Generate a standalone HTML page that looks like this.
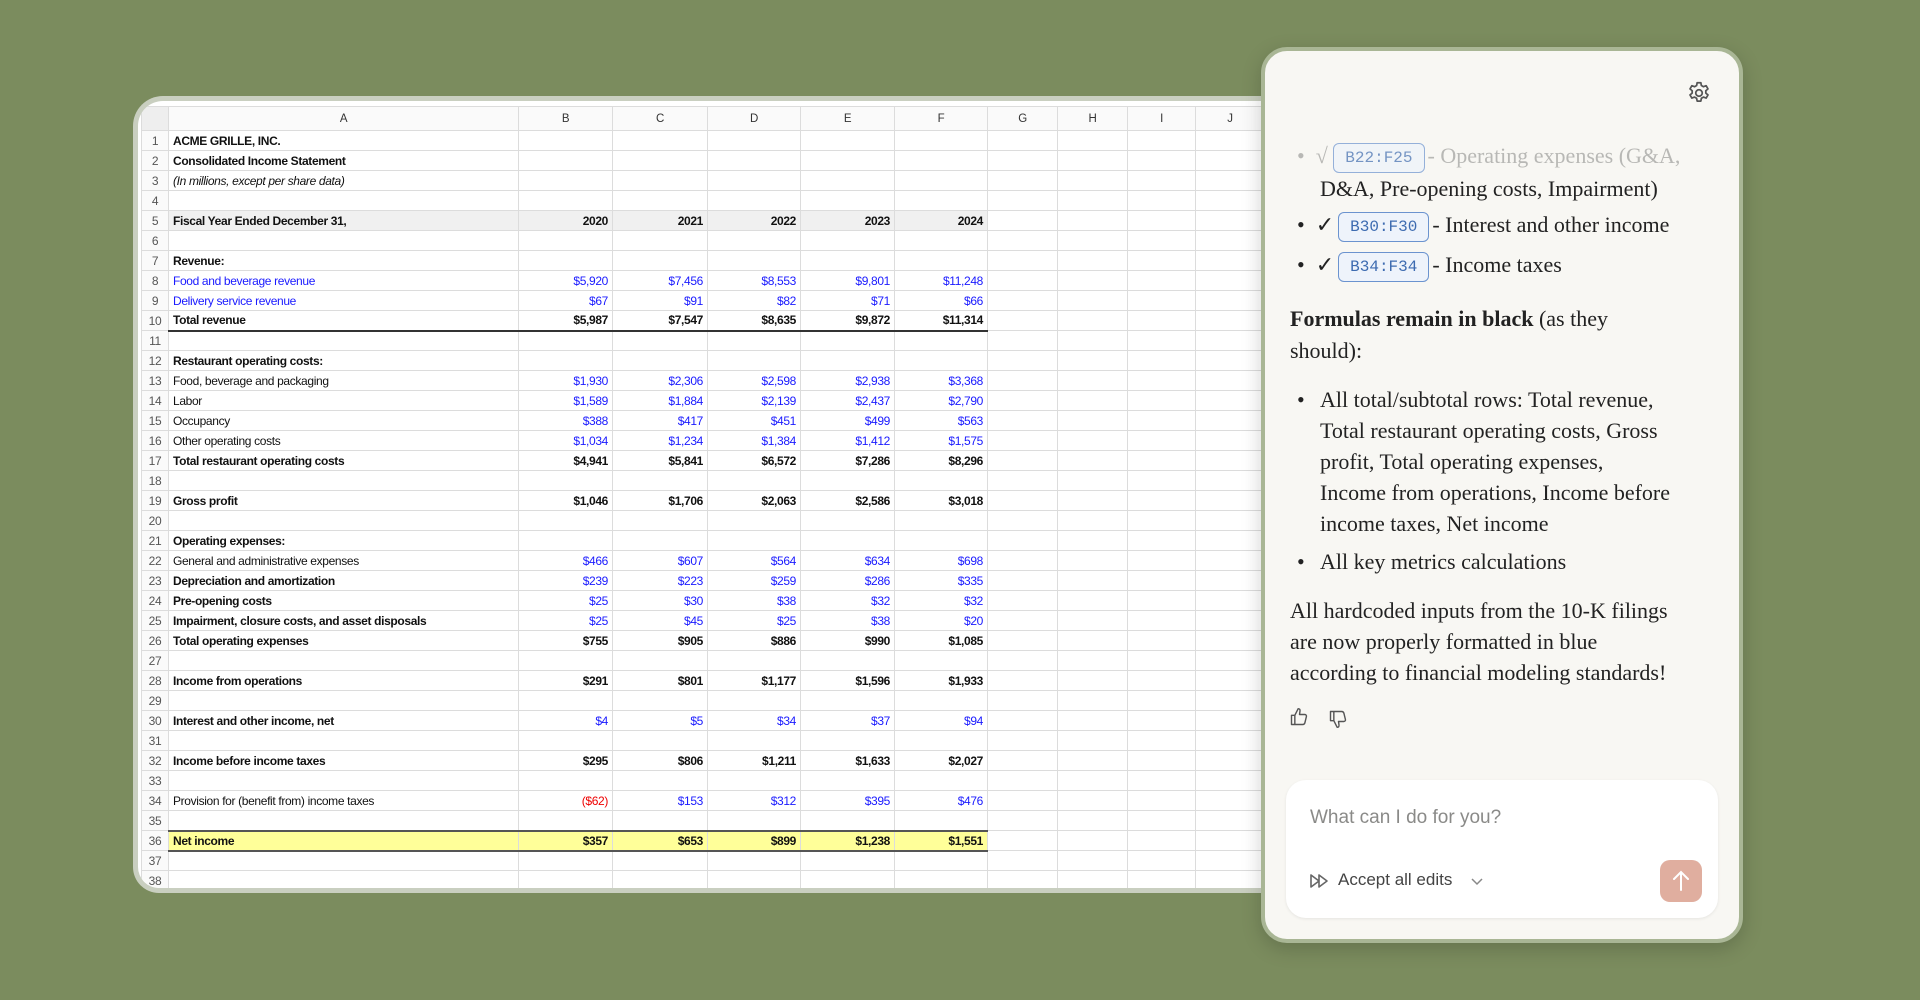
<!DOCTYPE html>
<html><head><meta charset="utf-8"><style>
*{box-sizing:border-box;margin:0;padding:0}
body{width:1920px;height:1000px;background:#7b8c5e;position:relative;overflow:hidden;font-family:"Liberation Sans",sans-serif}
.sheet{position:absolute;left:133px;top:96px;width:1200px;height:797px;background:#fff;border-radius:30px 0 0 26px;border:5px solid #c9cfc0;border-right:none;overflow:hidden}
table{position:absolute;left:3px;top:5px;border-collapse:collapse;table-layout:fixed;font-size:12px;letter-spacing:-0.35px;color:#111}
td{height:20px;border:1px solid #dcdcdc;padding:0 4px;white-space:nowrap;overflow:hidden}
tr.h td{height:24px;text-align:center;color:#333;background:#fafafa;font-size:11.5px}
td.n{text-align:center;color:#555;background:#fafafa;padding:0}
td.r{text-align:right}
.b{font-weight:bold}.i{font-style:italic}.bl{color:#1a1aff}.rd{color:#e00}
tr.g td:not(.n){background:#f0f0f0}
tr.t td.k{border-bottom:2px solid #333}
tr.y td.k{background:#ffff99;border-top:2px solid #555;border-bottom:2px solid #555}
.panel{position:absolute;left:1261px;top:47px;width:482px;height:896px;background:#f8f7f3;border-radius:26px;border:4px solid #a9b695;box-shadow:0 6px 20px rgba(0,0,0,.18);font-family:"Liberation Serif",serif;color:#222;font-size:22px}
.panel .ln{position:absolute;white-space:nowrap;line-height:31px}
.chip{display:inline-block;font-family:"Liberation Mono",monospace;font-size:16px;color:#3d6bb0;background:#eef3fb;border:1.5px solid #6b93cf;border-radius:6px;padding:2px 11px;line-height:24px;vertical-align:1px;margin-right:3px}
.input{position:absolute;left:21px;top:729px;width:432px;height:138px;background:#fff;border-radius:20px;box-shadow:0 1px 3px rgba(0,0,0,.08);font-family:"Liberation Sans",sans-serif}
</style></head><body>
<div class="sheet">
<table>
<colgroup><col style="width:27px"><col style="width:350px"><col style="width:94px"><col style="width:95px"><col style="width:93px"><col style="width:94px"><col style="width:93px"><col style="width:70px"><col style="width:70px"><col style="width:68px"><col style="width:69px"><col style="width:60px"></colgroup>
<tr class="h"><td class="n" style="background:#eee"></td><td>A</td><td>B</td><td>C</td><td>D</td><td>E</td><td>F</td><td>G</td><td>H</td><td>I</td><td>J</td><td></td></tr>
<tr><td class="n">1</td><td class="b">ACME GRILLE, INC.</td><td></td><td></td><td></td><td></td><td></td><td></td><td></td><td></td><td></td><td></td></tr>
<tr><td class="n">2</td><td class="b">Consolidated Income Statement</td><td></td><td></td><td></td><td></td><td></td><td></td><td></td><td></td><td></td><td></td></tr>
<tr><td class="n">3</td><td class="i">(In millions, except per share data)</td><td></td><td></td><td></td><td></td><td></td><td></td><td></td><td></td><td></td><td></td></tr>
<tr><td class="n">4</td><td></td><td></td><td></td><td></td><td></td><td></td><td></td><td></td><td></td><td></td><td></td></tr>
<tr class="g"><td class="n">5</td><td class="b">Fiscal Year Ended December 31,</td><td class="r b">2020</td><td class="r b">2021</td><td class="r b">2022</td><td class="r b">2023</td><td class="r b">2024</td><td style="background:#fff"></td><td style="background:#fff"></td><td style="background:#fff"></td><td style="background:#fff"></td><td style="background:#fff"></td></tr>
<tr><td class="n">6</td><td></td><td></td><td></td><td></td><td></td><td></td><td></td><td></td><td></td><td></td><td></td></tr>
<tr><td class="n">7</td><td class="b">Revenue:</td><td></td><td></td><td></td><td></td><td></td><td></td><td></td><td></td><td></td><td></td></tr>
<tr><td class="n">8</td><td class="bl">Food and beverage revenue</td><td class="r bl">$5,920</td><td class="r bl">$7,456</td><td class="r bl">$8,553</td><td class="r bl">$9,801</td><td class="r bl">$11,248</td><td></td><td></td><td></td><td></td><td></td></tr>
<tr><td class="n">9</td><td class="bl">Delivery service revenue</td><td class="r bl">$67</td><td class="r bl">$91</td><td class="r bl">$82</td><td class="r bl">$71</td><td class="r bl">$66</td><td></td><td></td><td></td><td></td><td></td></tr>
<tr class="t"><td class="n">10</td><td class="b k">Total revenue</td><td class="r b k">$5,987</td><td class="r b k">$7,547</td><td class="r b k">$8,635</td><td class="r b k">$9,872</td><td class="r b k">$11,314</td><td></td><td></td><td></td><td></td><td></td></tr>
<tr><td class="n">11</td><td></td><td></td><td></td><td></td><td></td><td></td><td></td><td></td><td></td><td></td><td></td></tr>
<tr><td class="n">12</td><td class="b">Restaurant operating costs:</td><td></td><td></td><td></td><td></td><td></td><td></td><td></td><td></td><td></td><td></td></tr>
<tr><td class="n">13</td><td>Food, beverage and packaging</td><td class="r bl">$1,930</td><td class="r bl">$2,306</td><td class="r bl">$2,598</td><td class="r bl">$2,938</td><td class="r bl">$3,368</td><td></td><td></td><td></td><td></td><td></td></tr>
<tr><td class="n">14</td><td>Labor</td><td class="r bl">$1,589</td><td class="r bl">$1,884</td><td class="r bl">$2,139</td><td class="r bl">$2,437</td><td class="r bl">$2,790</td><td></td><td></td><td></td><td></td><td></td></tr>
<tr><td class="n">15</td><td>Occupancy</td><td class="r bl">$388</td><td class="r bl">$417</td><td class="r bl">$451</td><td class="r bl">$499</td><td class="r bl">$563</td><td></td><td></td><td></td><td></td><td></td></tr>
<tr><td class="n">16</td><td>Other operating costs</td><td class="r bl">$1,034</td><td class="r bl">$1,234</td><td class="r bl">$1,384</td><td class="r bl">$1,412</td><td class="r bl">$1,575</td><td></td><td></td><td></td><td></td><td></td></tr>
<tr><td class="n">17</td><td class="b">Total restaurant operating costs</td><td class="r b">$4,941</td><td class="r b">$5,841</td><td class="r b">$6,572</td><td class="r b">$7,286</td><td class="r b">$8,296</td><td></td><td></td><td></td><td></td><td></td></tr>
<tr><td class="n">18</td><td></td><td></td><td></td><td></td><td></td><td></td><td></td><td></td><td></td><td></td><td></td></tr>
<tr><td class="n">19</td><td class="b">Gross profit</td><td class="r b">$1,046</td><td class="r b">$1,706</td><td class="r b">$2,063</td><td class="r b">$2,586</td><td class="r b">$3,018</td><td></td><td></td><td></td><td></td><td></td></tr>
<tr><td class="n">20</td><td></td><td></td><td></td><td></td><td></td><td></td><td></td><td></td><td></td><td></td><td></td></tr>
<tr><td class="n">21</td><td class="b">Operating expenses:</td><td></td><td></td><td></td><td></td><td></td><td></td><td></td><td></td><td></td><td></td></tr>
<tr><td class="n">22</td><td>General and administrative expenses</td><td class="r bl">$466</td><td class="r bl">$607</td><td class="r bl">$564</td><td class="r bl">$634</td><td class="r bl">$698</td><td></td><td></td><td></td><td></td><td></td></tr>
<tr><td class="n">23</td><td class="b">Depreciation and amortization</td><td class="r bl">$239</td><td class="r bl">$223</td><td class="r bl">$259</td><td class="r bl">$286</td><td class="r bl">$335</td><td></td><td></td><td></td><td></td><td></td></tr>
<tr><td class="n">24</td><td class="b">Pre-opening costs</td><td class="r bl">$25</td><td class="r bl">$30</td><td class="r bl">$38</td><td class="r bl">$32</td><td class="r bl">$32</td><td></td><td></td><td></td><td></td><td></td></tr>
<tr><td class="n">25</td><td class="b">Impairment, closure costs, and asset disposals</td><td class="r bl">$25</td><td class="r bl">$45</td><td class="r bl">$25</td><td class="r bl">$38</td><td class="r bl">$20</td><td></td><td></td><td></td><td></td><td></td></tr>
<tr><td class="n">26</td><td class="b">Total operating expenses</td><td class="r b">$755</td><td class="r b">$905</td><td class="r b">$886</td><td class="r b">$990</td><td class="r b">$1,085</td><td></td><td></td><td></td><td></td><td></td></tr>
<tr><td class="n">27</td><td></td><td></td><td></td><td></td><td></td><td></td><td></td><td></td><td></td><td></td><td></td></tr>
<tr><td class="n">28</td><td class="b">Income from operations</td><td class="r b">$291</td><td class="r b">$801</td><td class="r b">$1,177</td><td class="r b">$1,596</td><td class="r b">$1,933</td><td></td><td></td><td></td><td></td><td></td></tr>
<tr><td class="n">29</td><td></td><td></td><td></td><td></td><td></td><td></td><td></td><td></td><td></td><td></td><td></td></tr>
<tr><td class="n">30</td><td class="b">Interest and other income, net</td><td class="r bl">$4</td><td class="r bl">$5</td><td class="r bl">$34</td><td class="r bl">$37</td><td class="r bl">$94</td><td></td><td></td><td></td><td></td><td></td></tr>
<tr><td class="n">31</td><td></td><td></td><td></td><td></td><td></td><td></td><td></td><td></td><td></td><td></td><td></td></tr>
<tr><td class="n">32</td><td class="b">Income before income taxes</td><td class="r b">$295</td><td class="r b">$806</td><td class="r b">$1,211</td><td class="r b">$1,633</td><td class="r b">$2,027</td><td></td><td></td><td></td><td></td><td></td></tr>
<tr><td class="n">33</td><td></td><td></td><td></td><td></td><td></td><td></td><td></td><td></td><td></td><td></td><td></td></tr>
<tr><td class="n">34</td><td>Provision for (benefit from) income taxes</td><td class="r rd">($62)</td><td class="r bl">$153</td><td class="r bl">$312</td><td class="r bl">$395</td><td class="r bl">$476</td><td></td><td></td><td></td><td></td><td></td></tr>
<tr><td class="n">35</td><td></td><td></td><td></td><td></td><td></td><td></td><td></td><td></td><td></td><td></td><td></td></tr>
<tr class="y"><td class="n">36</td><td class="b k">Net income</td><td class="r b k">$357</td><td class="r b k">$653</td><td class="r b k">$899</td><td class="r b k">$1,238</td><td class="r b k">$1,551</td><td></td><td></td><td></td><td></td><td></td></tr>
<tr><td class="n">37</td><td></td><td></td><td></td><td></td><td></td><td></td><td></td><td></td><td></td><td></td><td></td></tr>
<tr><td class="n">38</td><td></td><td></td><td></td><td></td><td></td><td></td><td></td><td></td><td></td><td></td><td></td></tr>
</table>
</div>

<div class="panel">
<svg style="position:absolute;left:421px;top:29px" width="26" height="26" viewBox="0 0 24 24" fill="none" stroke="#555" stroke-width="1.6" stroke-linejoin="round"><circle cx="12" cy="12" r="3"/><path d="M10.3 2.5h3.4l.5 2.6 1.9 1.1 2.5-.9 1.7 2.9-2 1.7v2.2l2 1.7-1.7 2.9-2.5-.9-1.9 1.1-.5 2.6h-3.4l-.5-2.6-1.9-1.1-2.5.9-1.7-2.9 2-1.7v-2.2l-2-1.7 1.7-2.9 2.5.9 1.9-1.1z"/></svg>
<div class="ln" style="left:32px;top:89px;color:#b8b8b5">•&nbsp; √ <span class="chip" style="opacity:.7">B22:F25</span>- Operating expenses (G&amp;A,</div>
<div class="ln" style="left:55px;top:122px">D&amp;A, Pre-opening costs, Impairment)</div>
<div class="ln" style="left:32px;top:158px">•&nbsp; ✓<span class="chip" style="margin-left:4px">B30:F30</span>- Interest and other income</div>
<div class="ln" style="left:32px;top:198px">•&nbsp; ✓<span class="chip" style="margin-left:4px">B34:F34</span>- Income taxes</div>
<div class="ln" style="left:25px;top:252px"><b>Formulas remain in black</b> (as they</div>
<div class="ln" style="left:25px;top:284px">should):</div>
<div class="ln" style="left:32px;top:333px">•&nbsp;&nbsp; All total/subtotal rows: Total revenue,</div>
<div class="ln" style="left:55px;top:364px">Total restaurant operating costs, Gross</div>
<div class="ln" style="left:55px;top:395px">profit, Total operating expenses,</div>
<div class="ln" style="left:55px;top:426px">Income from operations, Income before</div>
<div class="ln" style="left:55px;top:457px">income taxes, Net income</div>
<div class="ln" style="left:32px;top:495px">•&nbsp;&nbsp; All key metrics calculations</div>
<div class="ln" style="left:25px;top:544px">All hardcoded inputs from the 10-K filings</div>
<div class="ln" style="left:25px;top:575px">are now properly formatted in blue</div>
<div class="ln" style="left:25px;top:606px">according to financial modeling standards!</div>
<svg style="position:absolute;left:24px;top:656px" width="20" height="20" viewBox="0 0 24 24" fill="none" stroke="#555" stroke-width="1.7" stroke-linejoin="round"><path d="M3 10h4v11H3zM7 10l4-8c1.5 0 2.5 1 2.2 2.7L12.6 9H19c1.3 0 2.2 1.2 1.9 2.4l-1.8 7.4c-.3 1.3-1.4 2.2-2.7 2.2H7"/></svg>
<svg style="position:absolute;left:63px;top:658px" width="20" height="20" viewBox="0 0 24 24" fill="none" stroke="#555" stroke-width="1.7" stroke-linejoin="round"><path d="M3 3h4v11H3zM7 14l4 8c1.5 0 2.5-1 2.2-2.7L12.6 15H19c1.3 0 2.2-1.2 1.9-2.4l-1.8-7.4C18.8 3.9 17.7 3 16.4 3H7"/></svg>
<div class="input">
<div style="position:absolute;left:24px;top:27px;font-size:19px;color:#8a8a88">What can I do for you?</div>
<svg style="position:absolute;left:24px;top:93px" width="22" height="16" viewBox="0 0 22 16" fill="none" stroke="#666" stroke-width="1.6" stroke-linejoin="round"><path d="M1 2v12l8-6zM9 2v12l8-6z"/></svg>
<div style="position:absolute;left:52px;top:90px;font-size:17px;color:#444">Accept all edits</div>
<svg style="position:absolute;left:184px;top:97px" width="14" height="10" viewBox="0 0 14 10" fill="none" stroke="#888" stroke-width="1.5"><path d="M2 2l5 5 5-5"/></svg>
<div style="position:absolute;left:374px;top:80px;width:42px;height:42px;border-radius:10px;background:#e0ae9f"><svg width="42" height="42" viewBox="0 0 42 42" fill="none" stroke="#fff" stroke-width="2" stroke-linecap="round"><path d="M21 30V12M14 19l7-7 7 7"/></svg></div>
</div>
</div>
</body></html>
